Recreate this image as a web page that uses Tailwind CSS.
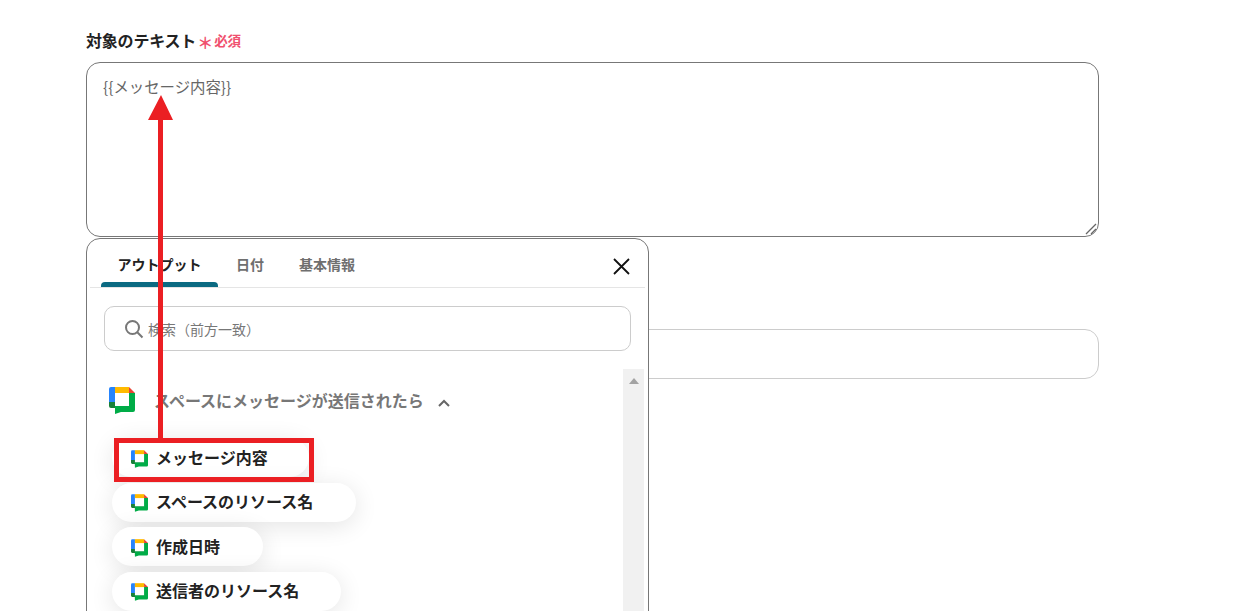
<!DOCTYPE html>
<html lang="ja">
<head>
<meta charset="utf-8">
<script src="https://cdn.jsdelivr.net/npm/@tailwindcss/browser@4"></script>
<title>対象のテキスト</title>
</head>
<body class="bg-white overflow-hidden font-['Noto_Sans_CJK_JP','Liberation_Sans',sans-serif]">
<svg class="hidden" width="0" height="0">
  <symbol id="chat" viewBox="0 0 26 27">
    <path d="M2 0H6V15H0V2A2 2 0 0 1 2 0Z" fill="#2684fc"/>
    <path d="M0 15H6V19H20V21H10L6 24.500L6 21H2A2 2 0 0 1 0 19Z" fill="#188038"/>
    <rect x="6" y="0" width="14" height="6" fill="#ffba00"/>
    <path d="M20 0L26 6H20Z" fill="#ea4335"/>
    <path d="M20 6H26V23A2 2 0 0 1 24 25H12L6 27V19H20Z" fill="#00ac47"/>
  </symbol>
</svg>
<div class="relative h-[611px] overflow-hidden pl-[86px] pt-[29px]">
  <div class="w-[1013px]">
    <div class="flex items-center h-[22px] leading-[22px]">
      <span class="text-base font-bold text-[#222] tracking-[-0.2px] whitespace-nowrap">対象のテキスト</span>
      <span class="w-[16px] ml-[1px] text-base font-bold text-[#f0506e] leading-none mt-1">＊</span>
      <span class="ml-[1px] text-[13.500px] font-bold text-[#f0506e]">必須</span>
    </div>
    <div class="relative mt-[11px]">
      <textarea class="block w-full h-[175px] resize-none rounded-[14px] border border-[#777] pl-4 pr-4 pt-[12px] text-[15.400px] leading-[22px] text-[#666] outline-none">{{メッセージ内容}}</textarea>
      <svg class="absolute right-[1px] bottom-[1px]" width="13" height="13" viewBox="0 0 13 13" fill="none" stroke="#666" stroke-width="1.300"><path d="M1 11L11 1M6 11L11 6"/></svg>
    </div>
    <div class="mt-[92px] h-[50px] rounded-[14px] border border-[#ccc]"></div>
  </div>

  <!-- 出力ポップアップ -->
  <div class="absolute left-[86px] top-[238px] w-[563px] h-[400px] bg-white rounded-[14px] border border-[#777] overflow-hidden">
    <div class="relative mx-[3px] h-[49px] border-b border-[#e5e5e5] flex text-sm font-bold">
      <div class="relative ml-[11px] w-[117px] pt-[15px] text-center text-[#222] leading-[20px]">
        <span>アウトプット</span>
        <div class="absolute left-0 right-0 bottom-[0px] h-[5px] rounded-t-[4px] bg-[#0b6a82]"></div>
      </div>
      <div class="ml-[18px] pt-[15px] text-[#6f6f6f] leading-[20px]">日付</div>
      <div class="ml-[35px] pt-[15px] text-[#6f6f6f] leading-[20px]">基本情報</div>
      <svg class="absolute left-[523px] top-[19px]" width="17" height="17" viewBox="0 0 17 17" fill="none" stroke="#111" stroke-width="1.800"><path d="M1 1L16 16M16 1L1 16"/></svg>
    </div>
    <div class="ml-[17px] mt-[18px] w-[527px] h-[45px] rounded-[10px] border border-[#ccc] flex items-center pl-[19px]">
      <svg width="20" height="20" viewBox="0 0 20 20" fill="none" stroke="#777" stroke-width="2"><circle cx="8.500" cy="8.500" r="6.500"/><path d="M13.300 13.300L18.500 18.500"/></svg>
      <span class="ml-[4px] text-sm text-[#777]">検索（前方一致）</span>
    </div>
    <div class="relative mt-[18px] h-[300px]">
      <div class="absolute left-[536px] top-0 w-[21px] h-full bg-[#f1f1f1]">
        <div class="mx-auto mt-[9px] w-0 h-0 border-x-[5px] border-x-transparent border-b-[6px] border-b-[#a3a3a3]"></div>
      </div>
      <div class="flex items-center pl-[22px] pt-[17px] h-[46px]">
        <svg class="w-[26px] h-[27px]"><use href="#chat"/></svg>
        <span class="ml-[19px] text-base font-bold text-[#777] relative top-[-1px]">スペースにメッセージが送信されたら</span>
        <svg class="ml-[13px] mt-1" width="14" height="10" viewBox="0 0 14 10" fill="none" stroke="#666" stroke-width="2"><path d="M2 8L7 3L12 8"/></svg>
      </div>
      <div class="ml-[25px] mt-[23px] flex flex-col items-start gap-[5.500px]">
        <div class="h-[39px] w-[197px] rounded-full bg-white shadow-[0_4px_24px_rgba(0,0,0,0.11)] flex items-center pl-[19px] pb-[2px] gap-2">
          <svg class="w-[17px] h-[18px] relative top-[2px]"><use href="#chat"/></svg>
          <span class="text-base font-bold text-[#222]">メッセージ内容</span>
        </div>
        <div class="h-[39px] rounded-full bg-white shadow-[0_4px_24px_rgba(0,0,0,0.11)] flex items-center pl-[19px] pb-[2px] pr-[43px] gap-2">
          <svg class="w-[17px] h-[18px] relative top-[2px]"><use href="#chat"/></svg>
          <span class="text-base font-bold text-[#222]">スペースのリソース名</span>
        </div>
        <div class="h-[39px] rounded-full bg-white shadow-[0_4px_24px_rgba(0,0,0,0.11)] flex items-center pl-[19px] pb-[2px] pr-[43px] gap-2">
          <svg class="w-[17px] h-[18px] relative top-[2px]"><use href="#chat"/></svg>
          <span class="text-base font-bold text-[#222]">作成日時</span>
        </div>
        <div class="h-[39px] rounded-full bg-white shadow-[0_4px_24px_rgba(0,0,0,0.11)] flex items-center pl-[19px] pb-[2px] pr-[42px] gap-2">
          <svg class="w-[17px] h-[18px] relative top-[2px]"><use href="#chat"/></svg>
          <span class="text-base font-bold text-[#222]">送信者のリソース名</span>
        </div>
      </div>
    </div>
  </div>

  <!-- 注釈 -->
  <div class="absolute left-[114px] top-[438px] w-[200px] h-[44px] border-[5px] border-[#eb1f23]"></div>
  <svg class="absolute left-[146px] top-[94px]" width="30" height="346" viewBox="0 0 30 346" fill="#eb1f23"><path d="M15 1L27 26H17V346H12V26H2Z"/></svg>
</div>
</body>
</html>
